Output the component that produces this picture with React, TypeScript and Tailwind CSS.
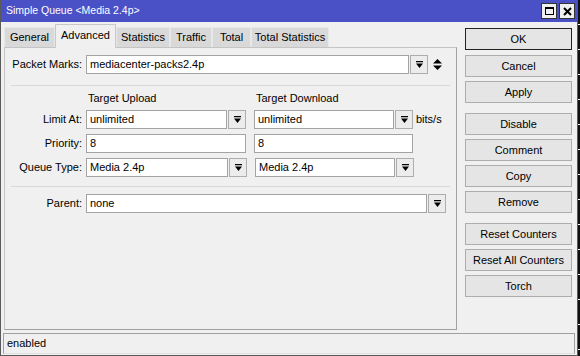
import React from "react";

const inputCls =
  "h-[19px] bg-white border border-[#a3a3a3] pl-[3px] flex items-center text-black leading-none";

function DropIcon() {
  return (
    <svg width="7" height="7" viewBox="0 0 7 7">
      <path d="M0 0h7v1.2H0z M0 2.6h7L3.5 7z" fill="#000" />
    </svg>
  );
}

function DropButton() {
  return (
    <div className="w-[18px] h-[19px] ml-[1px] border border-[#adadad] bg-[#ececec] flex items-center justify-center">
      <DropIcon />
    </div>
  );
}

function Field({ value, w }: { value: string; w: string }) {
  return <div className={`${inputCls} ${w}`}>{value}</div>;
}

function Label({ text }: { text: string }) {
  return <div className="w-[78px] text-right pr-[1px] mr-[3px] text-black">{text}</div>;
}

const buttonGroups = [
  ["OK", "Cancel", "Apply"],
  ["Disable", "Comment", "Copy", "Remove"],
  ["Reset Counters", "Reset All Counters", "Torch"],
];

const tabs = [
  { name: "General", w: "w-[51px]" },
  { name: "Advanced", w: "w-[61px]", active: true },
  { name: "Statistics", w: "w-[54px]" },
  { name: "Traffic", w: "w-[42px]" },
  { name: "Total", w: "w-[39px]" },
  { name: "Total Statistics", w: "w-[78px]" },
];

export default function App() {
  return (
    <div className="w-[580px] h-[356px] flex bg-black text-[11px] font-['Liberation_Sans',Arial,sans-serif] overflow-hidden">
      <div className="w-[578px] h-[356px] flex flex-col bg-[#f0f0f0] border-x border-b border-[#5a5a5a]">
        {/* Title bar */}
        <div className="h-[22px] bg-[#4a51c7] flex items-center pl-[5px] pr-[2px] text-white">
          <span className="flex-1 text-[10.5px]">Simple Queue &lt;Media 2.4p&gt;</span>
          <div className="flex gap-[2px]">
            <div className="w-[16px] h-[16px] bg-[#f0f0f0] border border-[#333] flex items-center justify-center">
              <div className="w-[9px] h-[8px] border border-black border-t-2" />
            </div>
            <div className="w-[16px] h-[16px] bg-[#f0f0f0] border border-[#333] flex items-center justify-center">
              <svg width="9" height="9" viewBox="0 0 9 9">
                <path d="M1 1L8 8M8 1L1 8" stroke="#000" strokeWidth="2" />
              </svg>
            </div>
          </div>
        </div>

        {/* Body */}
        <div className="flex-1 flex pt-[2px] pl-[3px]">
          <div className="w-[453px] flex flex-col">
            {/* Tabs */}
            <div className="h-[23px] flex items-end">
              {tabs.map((t) =>
                t.active ? (
                  <div
                    key={t.name}
                    className={`${t.w} h-[24px] -mb-px relative z-10 bg-[#f0f0f0] border border-b-0 border-[#c8c8c8] flex items-center justify-center pb-[3px] text-black`}
                  >
                    {t.name}
                  </div>
                ) : (
                  <div
                    key={t.name}
                    className={`${t.w} h-[20px] bg-[#d9d9d9] border border-[#e8e8e8] border-b-0 flex items-center justify-center text-black`}
                  >
                    {t.name}
                  </div>
                )
              )}
            </div>

            {/* Panel */}
            <div className="h-[283px] border border-[#c4c4c4] border-r-[#a0a0a0] border-b-[#a0a0a0] flex flex-col pt-[7px]">
              <div className="flex items-center">
                <Label text="Packet Marks:" />
                <Field value="mediacenter-packs2.4p" w="w-[323px]" />
                <DropButton />
                <svg className="ml-[5px]" width="9" height="11" viewBox="0 0 9 11">
                  <path d="M4.5 0L9 4.5H0z M0 6.5h9L4.5 11z" fill="#000" />
                </svg>
              </div>

              <div className="mt-[11px] mx-[6px] h-px bg-[#d8d8d8]" />

              <div className="h-[24px] flex items-center text-black">
                <div className="w-[83px]" />
                <div className="w-[168px]">Target Upload</div>
                <div>Target Download</div>
              </div>

              <div className="flex items-center">
                <Label text="Limit At:" />
                <Field value="unlimited" w="w-[141px]" />
                <DropButton />
                <div className="w-[8px]" />
                <Field value="unlimited" w="w-[140px]" />
                <DropButton />
                <span className="ml-[3px] text-black">bits/s</span>
              </div>

              <div className="flex items-center mt-[5px]">
                <Label text="Priority:" />
                <Field value="8" w="w-[160px]" />
                <div className="w-[8px]" />
                <Field value="8" w="w-[159px]" />
              </div>

              <div className="flex items-center mt-[5px]">
                <Label text="Queue Type:" />
                <Field value="Media 2.4p" w="w-[142px]" />
                <DropButton />
                <div className="w-[8px]" />
                <Field value="Media 2.4p" w="w-[140px]" />
                <DropButton />
              </div>

              <div className="mt-[9px] mx-[6px] h-px bg-[#d8d8d8]" />

              <div className="flex items-center mt-[7px]">
                <Label text="Parent:" />
                <Field value="none" w="w-[341px]" />
                <DropButton />
              </div>
            </div>
          </div>

          {/* Buttons */}
          <div className="ml-[8px] pt-[4px] w-[107px] flex flex-col gap-[10px]">
            {buttonGroups.map((group, gi) => (
              <div key={gi} className="flex flex-col gap-[4px]">
                {group.map((b) => (
                  <div
                    key={b}
                    className={`h-[22px] flex items-center justify-center text-black bg-[#e5e5e5] border ${
                      b === "OK" ? "border-[#222] mb-px" : "border-[#adadad]"
                    }`}
                  >
                    {b}
                  </div>
                ))}
              </div>
            ))}
          </div>
        </div>

        {/* Status bar */}
        <div className="h-[21px] mx-[2px] mb-[1px] border border-[#a0a0a0] border-b-[#e0e0e0] flex items-center pl-[3px] text-black">
          enabled
        </div>
      </div>
      <div className="w-[2px] h-full bg-[repeating-linear-gradient(to_bottom,#111_0px,#111_24px,#fff_24px,#fff_25px)]" />
    </div>
  );
}
